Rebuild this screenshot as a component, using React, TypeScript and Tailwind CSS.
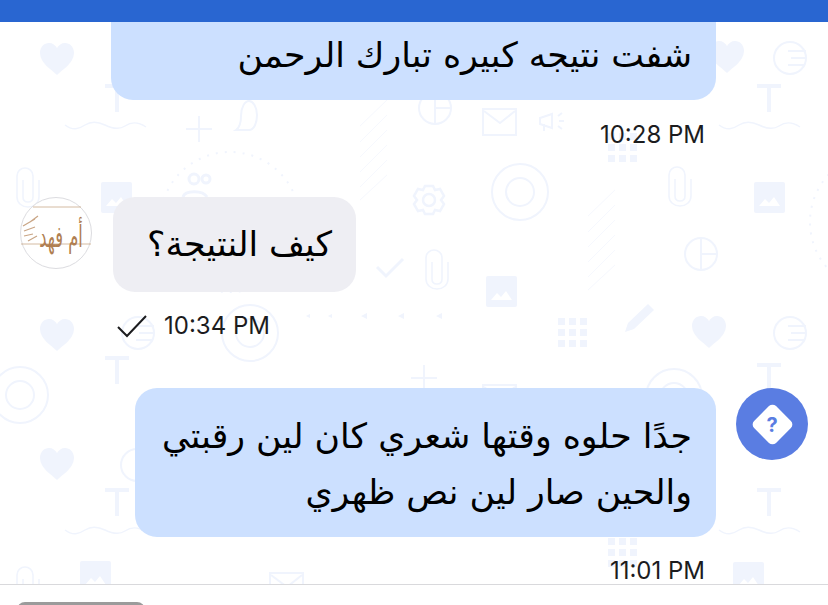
const ink = "#f0f4fd";

const Heart = ({ x, y }: { x: number; y: number }) => (
  <path transform={`translate(${x} ${y})`} d="M0 17C-5 12-17 5-17-5c0-6 4-10 9-10 4 0 6 2 8 5 2-3 4-5 8-5 5 0 9 4 9 10C17 5 5 12 0 17Z" fill={ink} />
);
const Tee = ({ x, y }: { x: number; y: number }) => (
  <path transform={`translate(${x} ${y})`} d="M-12-13H12M0-13V13" fill="none" stroke={ink} strokeWidth="4" />
);
const Wave = ({ x, y }: { x: number; y: number }) => (
  <path transform={`translate(${x} ${y})`} d="M0 0c8 6 14 4 20 0s12-4 20 0 14 5 20 1 12-5 21 1" fill="none" stroke={ink} strokeWidth="1.5" />
);
const Clip = ({ x, y }: { x: number; y: number }) => (
  <path transform={`translate(${x} ${y})`} d="M-5-6V11c0 3 2 5 5 5s5-2 5-5V-10c0-5-4-8-8-8s-8 3-8 8V11c0 6 5 10 11 10s11-4 11-10V-6" fill="none" stroke={ink} strokeWidth="1.6" />
);
const Photo = ({ x, y }: { x: number; y: number }) => (
  <g transform={`translate(${x} ${y})`}>
    <rect x="0" y="0" width="31" height="31" rx="2" fill={ink} />
    <path d="M5 24l6-7 4 4 5-6 6 9Z" fill="#fff" />
  </g>
);
const Striped = ({ x, y }: { x: number; y: number }) => (
  <g transform={`translate(${x} ${y})`} fill="none" stroke={ink} strokeWidth="2">
    <circle r="16" />
    <path d="M-2-7H16M1 0H17M-2 7H15" />
  </g>
);
const Pie = ({ x, y }: { x: number; y: number }) => (
  <g transform={`translate(${x} ${y})`} fill="none" stroke={ink} strokeWidth="2">
    <circle r="16" />
    <path d="M0-16V16M0 0H16" />
  </g>
);
const Ring = ({ x, y }: { x: number; y: number }) => (
  <g transform={`translate(${x} ${y})`} fill="none" stroke={ink} strokeWidth="2">
    <circle r="28" />
    <circle r="14" />
  </g>
);
const Mail = ({ x, y }: { x: number; y: number }) => (
  <g transform={`translate(${x} ${y})`} fill="none" stroke={ink} strokeWidth="2">
    <rect x="0" y="0" width="33" height="26" />
    <path d="M1 2l16 12L32 2" />
  </g>
);
const Dots = ({ x, y }: { x: number; y: number }) => (
  <g transform={`translate(${x} ${y})`} fill={ink}>
    {[0, 11, 22].map((a) =>
      [0, 11, 22].map((b) => <rect key={`${a}-${b}`} x={a} y={b} width="7" height="7" />),
    )}
  </g>
);
const Plus = ({ x, y }: { x: number; y: number }) => (
  <path transform={`translate(${x} ${y})`} d="M-13 0H13M0-13V13" fill="none" stroke={ink} strokeWidth="2" />
);
const Hatch = ({ x, y }: { x: number; y: number }) => (
  <path
    transform={`translate(${x} ${y})`}
    d="M0 26L27 0M0 42L27 15M0 57L27 30M0 72L27 45M0 87L27 60M0 100L27 75"
    fill="none"
    stroke="#f6f8fe"
    strokeWidth="1"
  />
);

function Wallpaper() {
  return (
    <svg className="absolute inset-0" width="828" height="605" viewBox="0 0 828 605">
      <Heart x={57} y={58} />
      <Heart x={57} y={334} />
      <Heart x={57} y={463} />
      <Heart x={709} y={331} />
      <Heart x={727} y={56} />
      <Tee x={117} y={99} />
      <Tee x={117} y={371} />
      <Tee x={117} y={503} />
      <Tee x={769} y={99} />
      <Tee x={769} y={378} />
      <Tee x={769} y={503} />
      <Wave x={65} y={125} />
      <Wave x={65} y={530} />
      <Wave x={719} y={125} />
      <Wave x={719} y={530} />
      <Clip x={28} y={186} />
      <Clip x={28} y={585} />
      <Clip x={680} y={185} />
      <Clip x={437} y={268} />
      <Photo x={101} y={182} />
      <Photo x={80} y={561} />
      <Photo x={754} y={182} />
      <Photo x={486} y={276} />
      <Photo x={733} y={562} />
      <Striped x={790} y={58} />
      <Striped x={790} y={333} />
      <Striped x={138} y={333} />
      <Striped x={137} y={465} />
      <Pie x={435} y={108} />
      <Pie x={701} y={254} />
      <Ring x={520} y={192} />
      <Ring x={250} y={333} />
      <Ring x={674} y={397} />
      <Ring x={20} y={395} />
      <Mail x={483} y={109} />
      <Mail x={483} y={385} />
      <Mail x={270} y={573} />
      <Dots x={608} y={133} />
      <Dots x={558} y={318} />
      <Dots x={608} y={538} />
      <Plus x={199} y={129} />
      <Plus x={424} y={378} />
      <Hatch x={360} y={100} />
      <Hatch x={588} y={190} />
      <circle cx="230" cy="222" r="70" fill="none" stroke={ink} strokeWidth="2" strokeDasharray="2 7" />
      <circle cx="880" cy="222" r="70" fill="none" stroke={ink} strokeWidth="2" strokeDasharray="2 7" />
      {/* speech bubble */}
      <path d="M236 130c3-2 5-8 5-14 0-9 4-15 8-15s8 6 8 14-3 15-8 15Z" fill="none" stroke={ink} strokeWidth="2" />
      {/* people */}
      <g fill="none" stroke={ink} strokeWidth="3">
        <circle cx="194" cy="179" r="5" />
        <circle cx="206" cy="179" r="4" />
        <path d="M183 197c2-7 20-7 24 0" />
      </g>
      {/* megaphone */}
      <path d="M540 118l12-4v14l-12-4ZM544 124v7M558 116l4-3M559 121h5M558 126l4 3" fill="none" stroke={ink} strokeWidth="2" />
      {/* gear */}
      <g transform="translate(429 200)" fill="none" stroke={ink} strokeWidth="2.5">
        <circle r="6" />
        <path d="M-4-14H4L6-10 11-11 15-4 12 0 15 4 11 11 6 10 4 14H-4L-6 10-11 11-15 4-12 0-15-4-11-11-6-10Z" />
      </g>
      {/* check, pencil, arrows */}
      <path d="M377 267l9 9 17-17" fill="none" stroke={ink} strokeWidth="3" />
      <path d="M625 332l3-9 20-19 6 6-20 19Z" fill={ink} />
      <path d="M361 316l6-3v6ZM398 316l6-3v6ZM436 316l6-3v6ZM306 316l4-2v4ZM328 316l4-2v4Z" fill={ink} />
    </svg>
  );
}

function BrandAvatar() {
  return (
    <div className="flex h-[72px] w-[72px] shrink-0 items-center justify-center rounded-full border border-[#dcdce0] bg-white">
      <svg width="70" height="70" viewBox="0 0 70 70">
        <path d="M12 9H60M0 46H70" fill="none" stroke="#c9a98c" strokeWidth="0.8" />
        <path d="M2 28l12-7M3 33l11-4M3 38l9-2M7 43l9-5M9 24l8-6" fill="none" stroke="#c9a585" strokeWidth="1.2" />
        <text
          transform="translate(40 49) scale(0.68 1.25)"
          textAnchor="middle"
          fontSize="24"
          fill="#b07f52"
          fontFamily="'DejaVu Sans', sans-serif"
          direction="rtl"
        >
          أم فهد
        </text>
      </svg>
    </div>
  );
}

function HelpAvatar() {
  return (
    <div className="flex h-[72px] w-[72px] shrink-0 items-center justify-center rounded-full bg-[#5a7de2]">
      <div className="flex h-[31px] w-[31px] rotate-45 items-center justify-center rounded-[5px] bg-white">
        <span className="-rotate-45 font-['Inter',sans-serif] text-[20px] font-bold text-[#5a7de2]">?</span>
      </div>
    </div>
  );
}

function Stamp({ time }: { time: string }) {
  return <span className="font-['Inter',sans-serif] text-[24px] leading-[26px] text-[#1c1c1e]">{time}</span>;
}

export default function App() {
  return (
    <div className="relative flex h-[605px] w-[828px] flex-col overflow-hidden bg-white font-['DejaVu_Sans',sans-serif]">
      <Wallpaper />

      <header className="relative h-[22px] shrink-0 bg-[#2966d1]" />

      <main className="relative flex flex-1 flex-col">
        <div className="ml-[111px] mr-[112px] flex h-[78px] items-center justify-start rounded-b-[22px] bg-[#cce0ff] px-6 pb-[13px]" dir="rtl">
          <p className="text-[34.7px] leading-[56px] text-black">شفت نتيجه كبيره تبارك الرحمن</p>
        </div>
        <div className="mr-[123px] mt-[22px] flex justify-end">
          <Stamp time="10:28 PM" />
        </div>

        <div className="ml-5 mt-[49px] flex items-start gap-[21px]">
          <BrandAvatar />
          <div className="w-[243px] rounded-[22px] bg-[#eeeef3] px-6 py-[19px]" dir="rtl">
            <p className="text-[34.7px] leading-[57px] text-black">كيف النتيجة؟</p>
          </div>
        </div>
        <div className="ml-[117px] mt-[21px] flex items-center gap-[17px]">
          <svg width="30" height="24" viewBox="0 0 30 24" fill="none" stroke="#1c1c1e" strokeWidth="2">
            <path d="M1 13l9 9L29 2" />
          </svg>
          <Stamp time="10:34 PM" />
        </div>

        <div className="mr-5 mt-[49px] flex items-start justify-end gap-5">
          <div className="w-[581px] rounded-[22px] bg-[#cce0ff] px-6 pb-[17px] pt-[20px]" dir="rtl">
            <p className="text-[34.7px] leading-[56px] text-black">
              جدًا حلوه وقتها شعري كان لين رقبتي
              <br />
              والحين صار لين نص ظهري
            </p>
          </div>
          <HelpAvatar />
        </div>
        <div className="mr-[123px] mt-[21px] flex justify-end">
          <Stamp time="11:01 PM" />
        </div>
      </main>

      <footer className="relative h-[21px] shrink-0 border-t border-[#d9d9dc] bg-white">
        <div className="ml-[17px] mt-[17px] h-[10px] w-[128px] rounded-t-[8px] bg-[#9b9b9b]" />
      </footer>
    </div>
  );
}
